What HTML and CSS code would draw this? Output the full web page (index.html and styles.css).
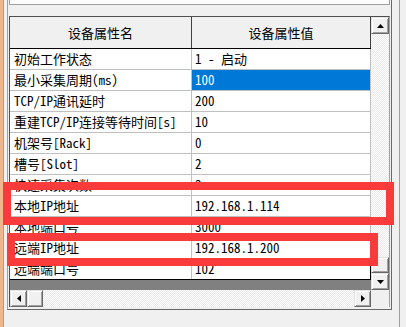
FILE: index.html
```html
<!DOCTYPE html>
<html lang="zh-CN">
<head>
    <meta charset="UTF-8">
    <meta name="viewport" content="width=device-width, initial-scale=1.0">
    <title>设备属性</title>
    <link rel="stylesheet" href="styles.css">
</head>
<body>
    <div class="page">
        <div class="edge"></div>
        <div class="panel">
            <div class="topbox"></div>
            <div class="grid">
                <div class="grid-main">
                    <div class="view">
                        <div class="head">
                            <div class="hcell name">设备属性名</div>
                            <div class="hcell value">设备属性值</div>
                        </div>
                        <div class="row"><div class="cell name">初始工作状态</div><div class="cell value">1 - 启动</div></div>
                        <div class="row"><div class="cell name">最小采集周期(ms)</div><div class="cell value selected">100</div></div>
                        <div class="row"><div class="cell name">TCP/IP通讯延时</div><div class="cell value">200</div></div>
                        <div class="row"><div class="cell name">重建TCP/IP连接等待时间[s]</div><div class="cell value">10</div></div>
                        <div class="row"><div class="cell name">机架号[Rack]</div><div class="cell value">0</div></div>
                        <div class="row"><div class="cell name">槽号[Slot]</div><div class="cell value">2</div></div>
                        <div class="row"><div class="cell name">快速采集次数</div><div class="cell value">3</div></div>
                        <div class="row"><div class="cell name">本地IP地址</div><div class="cell value">192.168.1.114</div></div>
                        <div class="row"><div class="cell name">本地端口号</div><div class="cell value">3000</div></div>
                        <div class="row"><div class="cell name">远端IP地址</div><div class="cell value">192.168.1.200</div></div>
                        <div class="row last"><div class="cell name">远端端口号</div><div class="cell value">102</div></div>
                        <div class="empty"></div>
                    </div>
                    <div class="vscroll">
                        <div class="sbtn">
                            <svg width="7" height="4" viewBox="0 0 7 4"><polygon points="0,4 7,4 3.5,0" fill="#000"/></svg>
                        </div>
                        <div class="track"></div>
                        <div class="sbtn vthumb"></div>
                        <div class="sbtn">
                            <svg width="7" height="4" viewBox="0 0 7 4"><polygon points="0,0 7,0 3.5,4" fill="#000"/></svg>
                        </div>
                    </div>
                </div>
                <div class="hscroll">
                    <div class="sbtn hbtn">
                        <svg width="4" height="7" viewBox="0 0 4 7"><polygon points="4,0 4,7 0,3.5" fill="#000"/></svg>
                    </div>
                    <div class="sbtn hthumb"></div>
                    <div class="track"></div>
                    <div class="sbtn hbtn">
                        <svg width="4" height="7" viewBox="0 0 4 7"><polygon points="0,0 0,7 4,3.5" fill="#000"/></svg>
                    </div>
                    <div class="corner"></div>
                </div>
            </div>
        </div>
        <div class="side"></div>
    </div>

    <!-- annotation boxes -->
    <div class="mark mark-local"></div>
    <div class="mark mark-remote"></div>
</body>
</html>
```

FILE: styles.css
```css
body {
    margin: 0;
    background: #f0f0f0;
    font-family: "Noto Sans Mono CJK SC", "Noto Sans CJK SC", sans-serif;
    font-size: 13px;
    color: #000;
    position: relative;
    height: 327px;
    overflow: hidden;
}
.page {
    display: flex;
    height: 327px;
}
.edge {
    width: 3px;
    background: #efb68c;
    border-right: 1px solid #a0a0a0;
}
.panel {
    margin-left: 3px;
    width: 382px;
    height: 309px;
    padding-left: 1px;
    border-left: 1px solid #a0a0a0;
    border-right: 1px solid #696969;
    border-bottom: 1px solid #696969;
}
.topbox {
    width: 379px;
    height: 4px;
    background: #fcfcfc;
    border: 1px solid #a0a0a0;
    border-top: none;
}
.grid {
    margin-top: 11px;
    width: 379px;
    border-top: 1px solid #505050;
    border-left: 1px solid #505050;
    border-right: 1px solid #a0a0a0;
}
.grid-main {
    display: flex;
    height: 273px;
}
.view {
    width: 361px;
}
.head {
    display: flex;
    height: 31px;
    border-bottom: 1px solid #000;
    background: #f0f0f0;
}
.hcell {
    line-height: 31px;
    text-align: center;
    border-right: 1px solid #404040;
}
.hcell.name {
    width: 181px;
}
.hcell.value {
    width: 178px;
}
.row {
    display: flex;
    height: 20px;
    background: #fff;
    border-bottom: 1px solid #c0c0c0;
}
.row.last {
    border-bottom-color: #000;
}
.cell {
    line-height: 20px;
    white-space: nowrap;
    overflow: hidden;
    border-right: 1px solid #c0c0c0;
}
.cell.name {
    width: 177px;
    padding-left: 4px;
}
.cell.value {
    width: 175px;
    padding-left: 3px;
}
.row.last .cell.value {
    border-right-color: #000;
}
.cell.selected {
    background: #0078d7;
    color: #fff;
}
.empty {
    height: 10px;
    background: #808080;
}
.track {
    flex: 1;
    background: repeating-conic-gradient(#fff 0 25%, #e9e9e9 0 50%) 0 0 / 2px 2px;
}
.vscroll {
    width: 18px;
    display: flex;
    flex-direction: column;
}
.sbtn {
    box-sizing: border-box;
    width: 18px;
    height: 17px;
    background: #f0f0f0;
    border: 1px solid;
    border-color: #e3e3e3 #696969 #696969 #e3e3e3;
    box-shadow: inset 1px 1px #fff, inset -1px -1px #a0a0a0;
    display: flex;
    align-items: center;
    justify-content: center;
}
.vthumb {
    height: 16px;
}
.hscroll {
    display: flex;
    height: 17px;
}
.hbtn {
    width: 17px;
}
.hthumb {
    width: 16px;
}
.corner {
    width: 18px;
    background: #f0f0f0;
}
.side {
    flex: 1;
    margin-left: 7px;
    border-left: 1px solid #a0a0a0;
}
.mark {
    position: absolute;
    box-sizing: border-box;
    border: 8px solid #f93b3b;
}
.mark-local {
    left: 3px;
    top: 182px;
    width: 391px;
    height: 43px;
}
.mark-remote {
    left: 7px;
    top: 233px;
    width: 371px;
    height: 33px;
}
```
